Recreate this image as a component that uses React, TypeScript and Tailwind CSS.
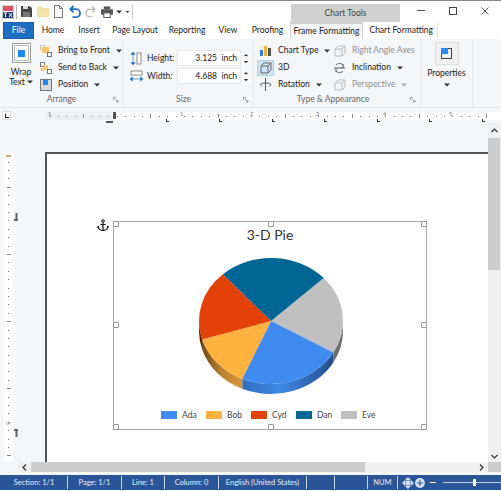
import React from "react";

const font = { fontFamily: 'Lato, "Noto Sans", sans-serif' };

function Caret({ cls = "" }: { cls?: string }) {
  return (
    <svg width="6" height="4" viewBox="0 0 6 4" className={cls}>
      <path d="M0 0.5h6l-3 3z" fill="currentColor" />
    </svg>
  );
}

function QuickBar() {
  return (
    <div className="h-[21px] flex items-center pl-[2px] relative">
      <svg width="12" height="14" viewBox="0 0 12 14" className="mr-[2px]">
        <rect x="0" y="0" width="12" height="14" fill="#fff" stroke="#555" strokeWidth="0.5" />
        <rect x="1" y="1" width="10" height="5" fill="#d9506a" />
        <rect x="1" y="7" width="10" height="6" fill="#22367a" />
        <path d="M2 8h3M3.500 8v4M7 8l3 4M10 8l-3 4" stroke="#fff" fill="none" strokeWidth="1" />
      </svg>
      <div className="w-px h-[14px] bg-[#b8b8b8] mr-[4px]" />
      <svg width="11" height="11" viewBox="0 0 11 11" className="mr-[5px]">
        <path d="M0 0h8l3 2v9H0z" fill="#444" />
        <rect x="2" y="0" width="5" height="3" fill="#ddd" />
        <rect x="2" y="6" width="7" height="5" fill="#777" />
      </svg>
      <svg width="12" height="11" viewBox="0 0 12 11" className="mr-[5px]">
        <path d="M.5 1.500h4l1 1h6v8H.5z" fill="#f6e2ac" stroke="#eccf86" strokeWidth="0.700" />
      </svg>
      <svg width="9" height="13" viewBox="0 0 9 13" className="mr-[6px]">
        <path d="M.5.5h5l3 3v9H.5z" fill="#fff" stroke="#777" />
        <path d="M5.500.5v3h3" fill="none" stroke="#777" />
      </svg>
      <svg width="12" height="13" viewBox="0 0 12 13" className="mr-[4px]">
        <path d="M4.500 1L1.300 4.200 4.500 7.400M1.500 4.200H7a4 4 0 0 1 0 8H3.500" fill="none" stroke="#1f72c8" strokeWidth="1.800" />
      </svg>
      <svg width="11" height="13" viewBox="0 0 12 13" className="mr-[5px]">
        <path d="M7.500 1l3.200 3.200-3.200 3.200M10.500 4.200H5a4 4 0 0 0 0 8h3.500" fill="none" stroke="#b5b5b5" strokeWidth="1.300" />
      </svg>
      <svg width="12" height="12" viewBox="0 0 13 12" className="mr-[3px]">
        <rect x="3" y="0" width="7" height="3" fill="#555" />
        <rect x="0" y="3" width="13" height="6" rx="1" fill="#555" />
        <rect x="3" y="7" width="7" height="5" fill="#fff" stroke="#555" />
      </svg>
      <Caret cls="text-[#333] mr-[3px]" />
      <div className="w-[5px] mr-[2px] flex justify-center"><Caret cls="text-[#333] scale-75" /></div>
      <div className="w-px h-[14px] bg-[#c8c8c8]" />
      <div className="ml-[158px] w-[109px] h-[18px] mt-[3px] self-start bg-[#d1d1d1] flex items-center justify-center text-[8.500px] text-[#444]">
        Chart Tools
      </div>
      <div className="ml-auto flex items-center mr-[12px] -mt-[2px] gap-[24px]">
        <div className="w-[8px] h-px bg-[#555]" />
        <div className="w-[8px] h-[8px] border border-[#444]" />
        <svg width="8" height="8" viewBox="0 0 8 8"><path d="M.5.5l7 7M7.500.5l-7 7" stroke="#444" strokeWidth="0.900" /></svg>
      </div>
    </div>
  );
}

function Tabs() {
  const items: [string, string][] = [
    ["Home", "w-[36px]"],
    ["Insert", "w-[36px]"],
    ["Page Layout", "w-[56px]"],
    ["Reporting", "w-[48px]"],
    ["View", "w-[34px]"],
    ["Proofing", "w-[45px]"],
  ];
  return (
    <div className="h-[17px] flex items-stretch text-[8.500px] text-[#222] pl-[3px] whitespace-nowrap">
      <div className="w-[31px] bg-[#1d6fc4] border border-[#1a5ea8] text-white flex items-center justify-center mr-[1px]">File</div>
      {items.map(([t, w]) => (
        <div key={t} className={`${w} flex items-center justify-center`}>{t}</div>
      ))}
      <div className="w-[73px] bg-[#f5f6f7] border-t-[2px] border-x border-[#d1d1d1] flex items-center justify-center">Frame Formatting</div>
      <div className="w-[75px] bg-white border-r border-[#e4e4e4] flex items-center justify-end pr-[4px]">Chart Formatting</div>
    </div>
  );
}

function GroupLabel({ text, cls = "" }: { text: string; cls?: string }) {
  return (
    <div className={`absolute bottom-[1px] left-0 right-0 flex justify-center text-[8.500px] text-[#666] ${cls}`}>{text}</div>
  );
}

function Launcher() {
  return (
    <svg width="6" height="6" viewBox="0 0 6 6" className="absolute right-[4px] bottom-[4px]">
      <path d="M.5 3V.5H3M2 2l3 3M5 3v2H3" fill="none" stroke="#777" strokeWidth="0.700" />
    </svg>
  );
}

function MenuRow({ icon, label, caretGap, disabled }: { icon: React.ReactNode; label: string; caretGap: string; disabled?: boolean }) {
  return (
    <div className={`h-[17px] flex items-center ${disabled ? "text-[#8f8f8f]" : "text-[#222]"}`}>
      <div className="w-[17px] h-[16px] flex items-center justify-center mr-[4px]">{icon}</div>
      <span>{label}</span>
      {caretGap !== "" && <Caret cls={`${caretGap} ${disabled ? "text-[#aaa]" : "text-[#333]"}`} />}
    </div>
  );
}

function Spin({ label, value, icon }: { label: string; value: string; icon: React.ReactNode }) {
  return (
    <div className="h-[18px] flex items-center">
      <div className="w-[16px] flex justify-center mr-[3px]">{icon}</div>
      <span className="w-[30px]">{label}</span>
      <div className="w-[64px] h-[16px] bg-white border border-[#e7e7e7] flex items-center justify-end pr-[3px] whitespace-pre">{value}</div>
      <div className="w-[9px] h-[16px] bg-[#fafafa] flex flex-col items-center justify-center gap-[3px]">
        <Caret cls="rotate-180 text-[#333] scale-75" />
        <Caret cls="text-[#333] scale-75" />
      </div>
    </div>
  );
}

const BoxIcon = ({ c = "#bbb" }: { c?: string }) => (
  <svg width="12" height="12" viewBox="0 0 12 12">
    <path d="M1 4l3-3h7v7l-3 3H1zM1 4h7v7M8 4l3-3" fill="none" stroke={c} />
  </svg>
);

function Ribbon() {
  return (
    <div className="h-[69px] bg-[#f5f6f7] flex text-[8.500px] text-[#222] border-b border-[#e4e4e4] whitespace-nowrap">
      {/* Arrange */}
      <div className="w-[124px] relative border-r border-[#e6e6e6] flex pl-[8px] pt-[3px]">
        <div className="w-[26px] flex flex-col items-center mr-[3px]">
          <div className="w-[19px] h-[20px] mt-[1px] border border-[#999] bg-white flex items-center justify-center">
            <div className="w-[15px] h-[16px] border border-[#bbb] flex items-center justify-center">
              <div className="w-[7px] h-[7px] bg-[#1e88f0]" />
            </div>
          </div>
          <div className="leading-[10px] mt-[4px] text-center">Wrap</div>
          <div className="leading-[10px] flex items-center gap-[2px]">Text <Caret cls="text-[#333]" /></div>
        </div>
        <div>
          <MenuRow label="Bring to Front" caretGap="ml-[6px]" icon={
            <svg width="12" height="12" viewBox="0 0 12 12"><rect x="0.500" y="0.500" width="4" height="4" fill="none" stroke="#999" strokeDasharray="1 1"/><rect x="2" y="2" width="7" height="6" fill="#f7c86a"/><rect x="7.500" y="7.500" width="4" height="4" fill="none" stroke="#777"/></svg>
          } />
          <MenuRow label="Send to Back" caretGap="ml-[6px]" icon={
            <svg width="12" height="12" viewBox="0 0 12 12"><rect x="0.500" y="0.500" width="4" height="4" fill="#fff" stroke="#777"/><rect x="4" y="3" width="4" height="5" fill="#f7c86a"/><rect x="1" y="6" width="3" height="3" fill="#f7c86a"/><rect x="7.500" y="7.500" width="4" height="4" fill="#fff" stroke="#777"/></svg>
          } />
          <MenuRow label="Position" caretGap="ml-[6px]" icon={
            <div className="w-[12px] h-[12px] bg-[#d8d8d8] border border-[#777] relative">
              <div className="absolute top-0 left-[2px] w-[5px] h-[5px] bg-[#1e88f0]" />
            </div>
          } />
        </div>
        <GroupLabel text="Arrange" />
        <Launcher />
      </div>
      {/* Size */}
      <div className="w-[130px] relative border-r border-[#e6e6e6] pl-[4px] pt-[10px] flex flex-col">
        <Spin label="Height:" value="3.125  inch" icon={
          <svg width="12" height="13" viewBox="0 0 12 13"><rect x="7" y="1" width="4" height="11" fill="#fff" stroke="#888"/><path d="M3 0l2 2.500H1zM3 13l-2-2.500h4zM3 3v7" fill="#1f72c8" stroke="#1f72c8" strokeWidth="0.600"/></svg>
        } />
        <Spin label="Width:" value="4.688  inch" icon={
          <svg width="13" height="12" viewBox="0 0 13 12"><rect x="1" y="1" width="11" height="4" fill="#fff" stroke="#888"/><path d="M0 9l2.500-2v4zM13 9l-2.500-2v4zM3 9h7" fill="#1f72c8" stroke="#1f72c8" strokeWidth="0.600"/></svg>
        } />
        <GroupLabel text="Size" cls="pr-[10px]" />
        <Launcher />
      </div>
      {/* Type & Appearance */}
      <div className="w-[167px] relative border-r border-[#e6e6e6] pl-[3px] pt-[3px] flex">
        <div className="w-[74px]">
          <MenuRow label="Chart Type" caretGap="ml-[5px]" icon={
            <svg width="13" height="12" viewBox="0 0 13 12"><rect x="1" y="5" width="3" height="6" fill="#2b7de9"/><rect x="5" y="1" width="3" height="10" fill="#f4b23a"/><rect x="9" y="3" width="3" height="8" fill="#555"/></svg>
          } />
          <div className="h-[17px] flex items-center text-[#222]">
            <div className="w-[17px] h-[16px] bg-[#cde4f7] border border-[#a9d0ef] flex items-center justify-center mr-[4px]"><BoxIcon c="#666" /></div>
            <span>3D</span>
          </div>
          <MenuRow label="Rotation" caretGap="ml-[6px]" icon={
            <svg width="13" height="13" viewBox="0 0 13 13"><path d="M6.500 0v13M1 6.500c2-2 9-2 11 0M1 6.500l2 2M12 6.500l-2 2" fill="none" stroke="#555"/></svg>
          } />
        </div>
        <div>
          <MenuRow disabled label="Right Angle Axes" caretGap="" icon={<BoxIcon />} />
          <MenuRow label="Inclination" caretGap="ml-[6px]" icon={
            <svg width="13" height="12" viewBox="0 0 13 12"><path d="M1 6h11M3 3c1-2 6-2 7 0M3 9c1 2 6 2 7 0M3 6v4M10 6v-4" fill="none" stroke="#555"/></svg>
          } />
          <MenuRow disabled label="Perspective" caretGap="ml-[6px]" icon={<BoxIcon />} />
        </div>
        <GroupLabel text="Type & Appearance" cls="pr-[8px]" />
        <Launcher />
      </div>
      {/* Properties */}
      <div className="w-[52px] relative border-r border-[#e6e6e6] flex flex-col items-center pt-[3px]">
        <div className="w-[24px] h-[23px] bg-[#f0f0f0] border border-[#dcdcdc] flex items-center justify-center">
          <div className="w-[11px] h-[11px] border border-[#444] relative">
            <div className="absolute -top-[1px] -left-[1px] w-[7px] h-[6px] bg-[#2b88ee]" />
          </div>
        </div>
        <div className="mt-[3px] leading-[10px]">Properties</div>
        <Caret cls="mt-[5px] text-[#333]" />
      </div>
    </div>
  );
}

function HRuler() {
  const ticks: React.ReactNode[] = [];
  for (let i = 0; i < 53; i++) {
    const major = i % 8 === 4;
    ticks.push(
      <div key={i} className="w-[8.400px] flex items-center justify-center">
        <div className={major ? "w-px h-[4px] bg-[#888]" : "w-px h-px bg-[#777]"} />
      </div>
    );
  }
  const nums: [string, string][] = [
    ["left-[48px]", "1"],
    ["left-[180px]", "1"],
    ["left-[250px]", "2"],
    ["left-[316px]", "3"],
    ["left-[383px]", "4"],
    ["left-[449px]", "5"],
  ];
  return (
    <div className="h-[15px] flex bg-[#f5f6f7] relative">
      <div className="w-[9px] h-[9px] ml-[2px] mt-[3px] bg-white border border-[#ddd] flex items-center justify-center">
        <div className="w-[4px] h-[4px] border-l border-b border-[#111]" />
      </div>
      <div className="ml-[34px] h-[8px] mt-[4px] w-[67px] bg-[#eeeff1]" />
      <div className="h-[8px] mt-[4px] flex-1 bg-white" />
      <div className="absolute left-[46px] top-[3px] h-[10px] flex items-center overflow-hidden">
        {ticks}
      </div>
      {nums.map(([c, n]) => (
        <span key={c} className={`absolute ${c} top-[2px] text-[5.500px] text-[#777] leading-[8px]`}>{n}</span>
      ))}
      <span className="absolute left-[113px] top-[4px] w-[3px] h-[7px] bg-[#555]" />
      <span className="absolute left-[106px] top-[13px] w-[7px] h-[2px] bg-[#555]" />
      {["left-[166px]", "left-[272px]", "left-[219px]", "left-[324px]", "left-[377px]", "left-[429px]", "left-[482px]"].map((c) => (
        <span key={c} className={`absolute ${c} top-[11px] w-[3px] h-[3px] border-l border-b border-[#333]`} />
      ))}
    </div>
  );
}

function VMarker({ cls, flip }: { cls: string; flip?: boolean }) {
  return (
    <svg width="5" height="8" viewBox="0 0 5 8" className={`absolute left-[14px] ${cls} ${flip ? "-scale-y-100" : ""}`}>
      <path d="M1.500 0h2v6h1.500v2H0V6h1.500z" fill="#666" />
    </svg>
  );
}

function VRuler() {
  const dots: React.ReactNode[] = [];
  for (let i = 0; i < 38; i++) {
    dots.push(
      <div key={i} className="h-[8.400px] flex items-center justify-center">
        <div className={i % 8 === 3 ? "w-[4px] h-px bg-[#888]" : "w-px h-px bg-[#777]"} />
      </div>
    );
  }
  return (
    <div className="w-[18px] shrink-0 bg-[#f5f6f7] pl-[4px] relative overflow-hidden">
      <div className="w-[9px] h-full mt-[29px] bg-white pt-[6px] overflow-hidden">{dots}</div>
      <span className="absolute left-[6px] top-[32px] w-[5px] h-[2px] bg-[#c9ab8c]" />
      <span className="absolute left-[6px] top-[296px] text-[5.500px] leading-[8px] text-[#777] rotate-90">3</span>
      <VMarker cls="top-[90px]" />
      <VMarker cls="top-[306px]" flip />
    </div>
  );
}

function Handle({ cls }: { cls: string }) {
  return <div className={`absolute ${cls} w-[6px] h-[6px] bg-white border border-[#999] rounded-[1px]`} />;
}

const cx = 90;
const cy = 81;
const rx = 72;
const ry = 63;

function pt(a: number, dy = 0) {
  const r = (a * Math.PI) / 180;
  return `${(cx + rx * Math.cos(r)).toFixed(2)} ${(cy + ry * Math.sin(r) + dy).toFixed(2)}`;
}
function slice(a: number, b: number) {
  return `M${cx} ${cy}L${pt(a)}A${rx} ${ry} 0 ${b - a > 180 ? 1 : 0} 1 ${pt(b)}Z`;
}
function side(a: number, b: number, d: number) {
  return `M${pt(a)}A${rx} ${ry} 0 0 1 ${pt(b)}L${pt(b, d)}A${rx} ${ry} 0 0 0 ${pt(a, d)}Z`;
}

function Pie() {
  const d = 10;
  return (
    <svg width="180" height="160" viewBox="0 0 180 160">
      <defs>
        <linearGradient id="sb" x1="0" x2="1" y1="0" y2="0">
          <stop offset="0" stopColor="#2f6ebd" />
          <stop offset="0.4" stopColor="#3f88e6" />
          <stop offset="1" stopColor="#234f8e" />
        </linearGradient>
        <linearGradient id="so" x1="0" x2="1" y1="0" y2="0">
          <stop offset="0" stopColor="#6e4a16" />
          <stop offset="0.5" stopColor="#b9822f" />
          <stop offset="1" stopColor="#d9983a" />
        </linearGradient>
      </defs>
      <path d={side(0, 30, d)} fill="#6f6f6f" />
      <path d={side(30, 113.500, d)} fill="url(#sb)" />
      <path d={side(113.500, 163, d)} fill="url(#so)" />
      <path d={side(163, 180, d)} fill="#5a1a02" />
      <path d={slice(-43, 30)} fill="#c0c0c0" />
      <path d={slice(30, 113.500)} fill="#3f8bef" />
      <path d={slice(113.500, 163)} fill="#ffb240" />
      <path d={slice(163, 228)} fill="#e24208" />
      <path d={slice(228, 317)} fill="#016596" />
    </svg>
  );
}

function Legend() {
  const items: [string, string][] = [
    ["Ada", "bg-[#3f8bef]"],
    ["Bob", "bg-[#ffb240]"],
    ["Cyd", "bg-[#e24208]"],
    ["Dan", "bg-[#016596]"],
    ["Eve", "bg-[#c0c0c0]"],
  ];
  return (
    <div className="absolute left-[47px] top-[187px] flex text-[8.500px] text-[#444]">
      {items.map(([t, c]) => (
        <div key={t} className="w-[45px] flex items-center gap-[5px] h-[12px]">
          <div className={`w-[16px] h-[8px] ${c}`} />
          <span>{t}</span>
        </div>
      ))}
    </div>
  );
}

function Anchor() {
  return (
    <svg width="12" height="13" viewBox="0 0 12 13" className="absolute left-[50px] top-[65px]">
      <circle cx="6" cy="2" r="1.300" fill="none" stroke="#111" strokeWidth="1" />
      <path d="M6 3.500V12M3.500 5.500h5M1 7.500c.5 2.800 2.500 4 5 4s4.500-1.200 5-4" fill="none" stroke="#111" strokeWidth="1.200" />
      <path d="M0 8.500l1-2 1.500 2zM12 8.500l-1-2-1.500 2z" fill="#111" />
    </svg>
  );
}

function Page() {
  return (
    <div className="flex-1 min-w-0 relative overflow-hidden bg-[#f5f6f7] pl-[27px] pt-[29px]">
      <div className="h-[400px] bg-white border-l-[2px] border-t-[2px] border-[#555] relative">
        <Anchor />
        <div className="absolute left-[66px] top-[67px] w-[314px] h-[209px] border border-[#aaa] bg-white">
          <div className="text-center text-[14px] leading-[20px] text-[#333] mt-[3px]">3-D Pie</div>
          <div className="absolute left-[67px] top-[18px]"><Pie /></div>
          <Legend />
          <Handle cls="-left-[1px] -top-[1px]" />
          <Handle cls="left-[154px] -top-[1px]" />
          <Handle cls="-right-[1px] -top-[1px]" />
          <Handle cls="-left-[1px] top-[100px]" />
          <Handle cls="-right-[1px] top-[100px]" />
          <Handle cls="-left-[1px] -bottom-[1px]" />
          <Handle cls="left-[154px] -bottom-[1px]" />
          <Handle cls="-right-[1px] -bottom-[1px]" />
        </div>
      </div>
    </div>
  );
}

function VScroll() {
  return (
    <div className="w-[13px] shrink-0 bg-[#f0f0f0] flex flex-col pr-[1px]">
      <div className="h-[15px] flex items-center justify-center text-[#333]">
        <svg width="7" height="5" viewBox="0 0 7 5"><path d="M.5 4l3-3 3 3" fill="none" stroke="currentColor" strokeWidth="1.200" /></svg>
      </div>
      <div className="h-[132px] bg-[#cdcdcd]" />
      <div className="flex-1" />
      <div className="h-[11px] flex items-center justify-center text-[#333]">
        <svg width="7" height="5" viewBox="0 0 7 5"><path d="M.5 1l3 3 3-3" fill="none" stroke="currentColor" strokeWidth="1.200" /></svg>
      </div>
    </div>
  );
}

function HScroll() {
  return (
    <div className="h-[13px] flex pl-[18px] pb-[3px] bg-[#f5f6f7] shrink-0">
      <div className="w-[13px] bg-[#f0f0f0] flex items-center justify-center text-[#333]">
        <svg width="5" height="7" viewBox="0 0 5 7"><path d="M4 .5l-3 3 3 3" fill="none" stroke="currentColor" strokeWidth="1.200" /></svg>
      </div>
      <div className="w-[334px] bg-[#cdcdcd]" />
      <div className="flex-1 bg-[#f0f0f0]" />
      <div className="w-[13px] bg-[#f0f0f0] flex items-center justify-center text-[#333]">
        <svg width="5" height="7" viewBox="0 0 5 7"><path d="M1 .5l3 3-3 3" fill="none" stroke="currentColor" strokeWidth="1.200" /></svg>
      </div>
      <div className="w-[13px] bg-[#cdcdcd]" />
    </div>
  );
}

function Status() {
  const Sep = () => <div className="w-px h-[13px] bg-[#c9d5e8]" />;
  const cells: [string, string][] = [
    ["Section: 1/1", "w-[66px]"],
    ["Page: 1/1", "w-[53px]"],
    ["Line: 1", "w-[42px]"],
    ["Column: 0", "w-[53px]"],
    ["English (United States)", "w-[87px]"],
    ["", "w-[27px]"],
    ["", "w-[32px]"],
    ["NUM", "w-[29px]"],
  ];
  return (
    <div className="h-[15px] bg-[#2a5699] flex items-center text-[7.500px] text-[#e8eef8] pl-[1px] shrink-0 mb-[1px]">
      {cells.map(([t, w], i) => (
        <React.Fragment key={i}>
          <div className={`${w} text-center shrink-0 whitespace-nowrap`}>{t}</div>
          <Sep />
        </React.Fragment>
      ))}
      <svg width="12" height="12" viewBox="0 0 12 12" className="ml-[4px]"><path d="M6 0l3 3H3zM6 12L3 9h6zM0 6l3-3v6zM12 6L9 3v6z" fill="#d5e0f0" /><rect x="3.500" y="3.500" width="5" height="5" fill="#d5e0f0" /></svg>
      <svg width="12" height="12" viewBox="0 0 12 12"><circle cx="6" cy="6" r="5" fill="#d5e0f0" /><path d="M3 6h6M6 3v6" stroke="#2a5699" /></svg>
      <div className="w-[6px] h-px bg-white ml-[4px] mr-[7px]" />
      <div className="relative w-[59px] h-px bg-[#c5d2e6]">
        <div className="absolute left-[30px] -top-[3px] w-[3px] h-[7px] bg-white" />
      </div>
    </div>
  );
}

export default function App() {
  return (
    <div className="w-[501px] h-[491px] overflow-hidden bg-white flex flex-col border-t border-[#8a8a8a]" style={font}>
      <QuickBar />
      <Tabs />
      <Ribbon />
      <HRuler />
      <div className="flex-1 min-h-0 flex">
        <VRuler />
        <Page />
        <VScroll />
      </div>
      <HScroll />
      <Status />
    </div>
  );
}
